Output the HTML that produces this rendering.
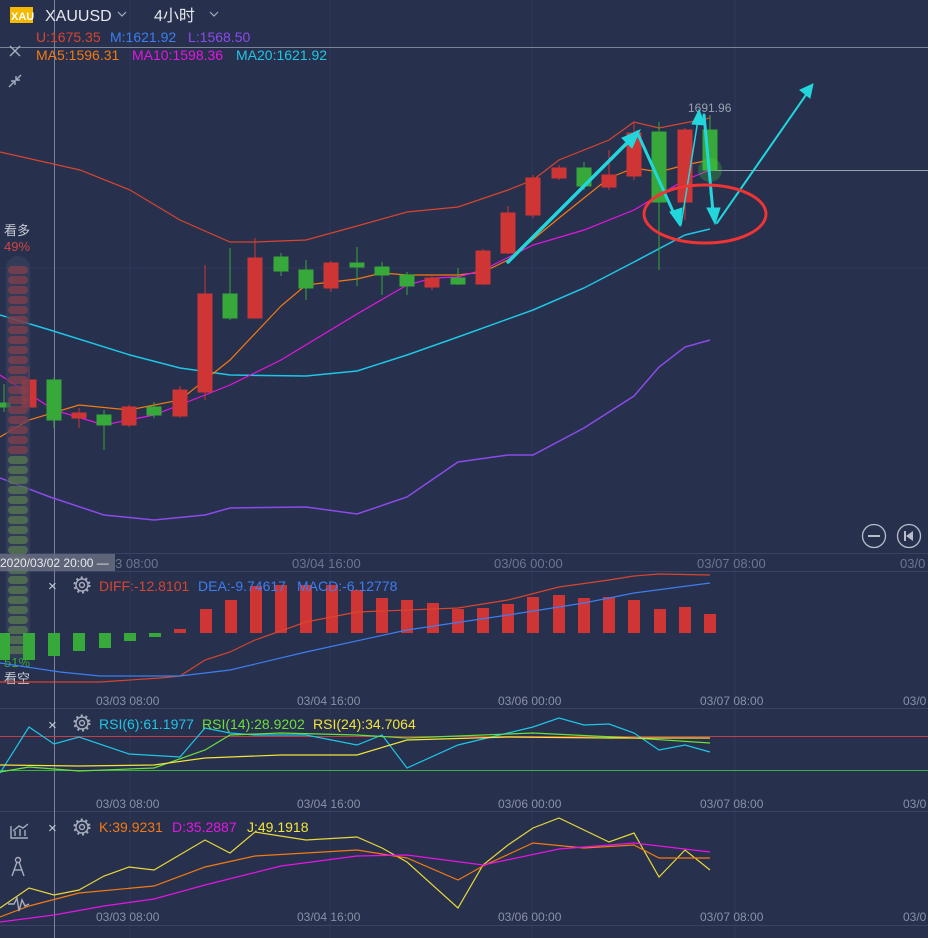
<!DOCTYPE html>
<html><head><meta charset="utf-8"><style>
html,body{margin:0;padding:0;background:#27304d;}
body{width:928px;height:938px;overflow:hidden;position:relative;font-family:"Liberation Sans","Noto Sans CJK SC",sans-serif;}
svg{position:absolute;left:0;top:0}
text{font-family:"Liberation Sans","Noto Sans CJK SC",sans-serif;}
</style></head><body>
<svg width="928" height="938" viewBox="0 0 928 938">
<rect width="928" height="938" fill="#27304d"/>
<g stroke="#2f3856" stroke-width="1">
<line x1="130" y1="0" x2="130" y2="938"/><line x1="330" y1="0" x2="330" y2="938"/>
<line x1="532" y1="0" x2="532" y2="938"/><line x1="735" y1="0" x2="735" y2="938"/>
<line x1="0" y1="268" x2="928" y2="268"/>
</g>
<g stroke="#3a4363" stroke-width="1">
<line x1="0" y1="553.5" x2="928" y2="553.5"/><line x1="0" y1="571.5" x2="928" y2="571.5"/>
<line x1="0" y1="708.5" x2="928" y2="708.5"/><line x1="0" y1="811.5" x2="928" y2="811.5"/>
<line x1="0" y1="925.5" x2="928" y2="925.5"/>
</g>
<line x1="54.5" y1="0" x2="54.5" y2="938" stroke="#7c8298" stroke-width="1"/>
<line x1="0" y1="47.5" x2="928" y2="47.5" stroke="#7c8298" stroke-width="1"/>
<line x1="710" y1="170.5" x2="928" y2="170.5" stroke="#9aa0b0" stroke-width="1"/>

<g fill="none" stroke-width="1.2">
<polyline stroke="#d8452f" points="0,152 80,170 130,190 180,220 230,242 255,242 306,240 357,226 407,212 458,207 508,190 533,180 559,160 609,140 634,122 659,128 710,118"/>
<polyline stroke="#1fc6e6" stroke-width="1.5" points="0,315 50,330 130,355 180,368 230,375 306,376 357,371 407,355 458,337 533,310 584,288 634,262 685,235 710,229"/>
<polyline stroke="#8b4bea" stroke-width="1.5" points="0,478 50,497 104,515 154,520 205,515 230,508 306,507 357,514 407,497 458,462 508,455 533,455 584,428 634,396 659,367 685,347 710,340"/>
<polyline stroke="#f47a12" points="0,437 29,420 79,405 129,410 180,400 230,360 281,306 306,285 357,279 382,273 407,275 458,275 483,272 508,260 559,218 609,178 634,168 659,172 685,165 710,160"/>
<polyline stroke="#e516e3" points="0,375 54,410 104,425 154,415 205,395 230,385 281,360 357,314 407,285 433,278 458,277 483,270 533,245 584,230 634,210 659,195 685,180 710,170"/>
</g>

<g>
<g stroke="#cf3535" fill="#cf3535">
<line x1="29" y1="366" x2="29" y2="410"/><rect x="22" y="380" width="14" height="27"/>
<line x1="79" y1="408" x2="79" y2="428"/><rect x="72" y="413" width="14" height="5"/>
<line x1="129" y1="405" x2="129" y2="427"/><rect x="122" y="407" width="14" height="18"/>
<line x1="180" y1="386" x2="180" y2="418"/><rect x="173" y="390" width="14" height="26"/>
<line x1="205" y1="265" x2="205" y2="400"/><rect x="198" y="294" width="14" height="98"/>
<line x1="255" y1="238" x2="255" y2="318"/><rect x="248" y="258" width="14" height="60"/>
<line x1="331" y1="261" x2="331" y2="292"/><rect x="324" y="263" width="14" height="25"/>
<line x1="432" y1="275" x2="432" y2="290"/><rect x="425" y="278" width="14" height="9"/>
<line x1="483" y1="249" x2="483" y2="285"/><rect x="476" y="251" width="14" height="33"/>
<line x1="508" y1="206" x2="508" y2="254"/><rect x="501" y="213" width="14" height="40"/>
<line x1="533" y1="175" x2="533" y2="218"/><rect x="526" y="178" width="14" height="37"/>
<line x1="559" y1="165" x2="559" y2="180"/><rect x="552" y="168" width="14" height="10"/>
<line x1="609" y1="150" x2="609" y2="190"/><rect x="602" y="175" width="14" height="12"/>
<line x1="634" y1="122" x2="634" y2="180"/><rect x="627" y="133" width="14" height="43"/>
<line x1="685" y1="128" x2="685" y2="220"/><rect x="678" y="130" width="14" height="72"/>
</g>
<g stroke="#37a83a" fill="#37a83a">
<line x1="4" y1="384" x2="4" y2="412"/><rect x="0" y="403" width="10" height="4"/>
<line x1="54" y1="378" x2="54" y2="428"/><rect x="47" y="380" width="14" height="40"/>
<line x1="104" y1="410" x2="104" y2="450"/><rect x="97" y="415" width="14" height="10"/>
<line x1="154" y1="402" x2="154" y2="418"/><rect x="147" y="407" width="14" height="8"/>
<line x1="230" y1="248" x2="230" y2="320"/><rect x="223" y="294" width="14" height="24"/>
<line x1="281" y1="253" x2="281" y2="276"/><rect x="274" y="257" width="14" height="14"/>
<line x1="306" y1="260" x2="306" y2="300"/><rect x="299" y="270" width="14" height="18"/>
<line x1="357" y1="247" x2="357" y2="286"/><rect x="350" y="263" width="14" height="4"/>
<line x1="382" y1="262" x2="382" y2="295"/><rect x="375" y="267" width="14" height="8"/>
<line x1="407" y1="272" x2="407" y2="295"/><rect x="400" y="275" width="14" height="11"/>
<line x1="458" y1="268" x2="458" y2="285"/><rect x="451" y="278" width="14" height="6"/>
<line x1="584" y1="162" x2="584" y2="190"/><rect x="577" y="168" width="14" height="18"/>
<line x1="659" y1="122" x2="659" y2="270"/><rect x="652" y="132" width="14" height="70"/>
<line x1="710" y1="115" x2="710" y2="195"/><rect x="703" y="130" width="14" height="40"/>
</g>
</g>
<circle cx="710" cy="170" r="12" fill="#3fdc3a" opacity="0.25"/>
<text x="688" y="112" fill="#9aa0b0" font-size="12">1691.96</text>

<g stroke="#22d6dc" fill="#22d6dc" stroke-linecap="round">
<line x1="508" y1="262" x2="632" y2="138" stroke-width="3.5"/>
<polygon points="640,130 622,138 632,148"/>
<line x1="637" y1="132" x2="676" y2="218" stroke-width="3"/>
<polygon points="680,226 670,212 682,208"/>
<line x1="681" y1="225" x2="698" y2="120" stroke-width="1.5"/>
<polygon points="699,110 692,124 705,125"/>
<line x1="704" y1="115" x2="713" y2="212" stroke-width="3"/>
<polygon points="715,224 707,208 720,208"/>
<line x1="717" y1="223" x2="808" y2="92" stroke-width="2"/>
<polygon points="813,84 800,90 810,98"/>
</g>
<ellipse cx="705" cy="214" rx="61" ry="29" fill="none" stroke="#ee3434" stroke-width="3"/>

<rect x="6" y="256" width="24" height="404" rx="12" fill="#3a4260" opacity="0.6"/>
<g fill="#8a3e4a" opacity="0.7">
<rect x="8" y="266" width="20" height="8" rx="4"/><rect x="8" y="276" width="20" height="8" rx="4"/><rect x="8" y="286" width="20" height="8" rx="4"/><rect x="8" y="296" width="20" height="8" rx="4"/><rect x="8" y="306" width="20" height="8" rx="4"/><rect x="8" y="316" width="20" height="8" rx="4"/><rect x="8" y="326" width="20" height="8" rx="4"/><rect x="8" y="336" width="20" height="8" rx="4"/><rect x="8" y="346" width="20" height="8" rx="4"/><rect x="8" y="356" width="20" height="8" rx="4"/><rect x="8" y="366" width="20" height="8" rx="4"/><rect x="8" y="376" width="20" height="8" rx="4"/><rect x="8" y="386" width="20" height="8" rx="4"/><rect x="8" y="396" width="20" height="8" rx="4"/><rect x="8" y="406" width="20" height="8" rx="4"/><rect x="8" y="416" width="20" height="8" rx="4"/><rect x="8" y="426" width="20" height="8" rx="4"/><rect x="8" y="436" width="20" height="8" rx="4"/><rect x="8" y="446" width="20" height="8" rx="4"/>
</g>
<g fill="#5a8050" opacity="0.7">
<rect x="8" y="456" width="20" height="8" rx="4"/><rect x="8" y="466" width="20" height="8" rx="4"/><rect x="8" y="476" width="20" height="8" rx="4"/><rect x="8" y="486" width="20" height="8" rx="4"/><rect x="8" y="496" width="20" height="8" rx="4"/><rect x="8" y="506" width="20" height="8" rx="4"/><rect x="8" y="516" width="20" height="8" rx="4"/><rect x="8" y="526" width="20" height="8" rx="4"/><rect x="8" y="536" width="20" height="8" rx="4"/><rect x="8" y="546" width="20" height="8" rx="4"/><rect x="8" y="556" width="20" height="8" rx="4"/><rect x="8" y="566" width="20" height="8" rx="4"/><rect x="8" y="576" width="20" height="8" rx="4"/><rect x="8" y="586" width="20" height="8" rx="4"/><rect x="8" y="596" width="20" height="8" rx="4"/><rect x="8" y="606" width="20" height="8" rx="4"/><rect x="8" y="616" width="20" height="8" rx="4"/><rect x="8" y="626" width="20" height="8" rx="4"/><rect x="8" y="636" width="20" height="8" rx="4"/><rect x="8" y="646" width="20" height="8" rx="4"/>
</g>
<text x="4" y="235" fill="#c8ccd6" font-size="13">看多</text>
<text x="4" y="251" fill="#d04545" font-size="13">49%</text>
<text x="4" y="667" fill="#37a83a" font-size="13">51%</text>
<text x="4" y="683" fill="#c8ccd6" font-size="13">看空</text>

<rect x="0" y="554" width="115" height="17" fill="#6a6f80" opacity="0.85"/>
<text x="0" y="567" fill="#e6e8ee" font-size="12">2020/03/02 20:00 —</text>
<g fill="#6d7590" font-size="13">
<text x="115" y="568">3 08:00</text><text x="292" y="568">03/04 16:00</text><text x="494" y="568">03/06 00:00</text><text x="697" y="568">03/07 08:00</text><text x="900" y="568">03/0</text>
</g>
<g fill="none" stroke="#b8bccb" stroke-width="1.3">
<circle cx="874" cy="536" r="11.5"/><line x1="868" y1="536" x2="880" y2="536" stroke-width="2"/>
<circle cx="909" cy="536" r="11.5"/><line x1="905" y1="531" x2="905" y2="541" stroke-width="2"/>
</g>
<polygon points="913,531 913,541 906,536" fill="#b8bccb"/>

<g fill="#37a83a">
<rect x="0" y="633" width="10" height="27"/><rect x="23" y="633" width="12" height="27"/><rect x="48" y="633" width="12" height="23"/><rect x="73" y="633" width="12" height="18"/><rect x="99" y="633" width="12" height="15"/><rect x="124" y="633" width="12" height="8"/><rect x="149" y="633" width="12" height="4"/>
</g>
<g fill="#cf3535">
<rect x="174" y="629" width="12" height="4"/><rect x="200" y="609" width="12" height="24"/><rect x="225" y="600" width="12" height="33"/><rect x="250" y="586" width="12" height="47"/><rect x="275" y="585" width="12" height="48"/><rect x="300" y="585" width="12" height="48"/><rect x="326" y="585" width="12" height="48"/><rect x="351" y="590" width="12" height="43"/><rect x="376" y="598" width="12" height="35"/><rect x="401" y="600" width="12" height="33"/><rect x="427" y="603" width="12" height="30"/><rect x="452" y="609" width="12" height="24"/><rect x="477" y="608" width="12" height="25"/><rect x="502" y="604" width="12" height="29"/><rect x="527" y="597" width="12" height="36"/><rect x="553" y="595" width="12" height="38"/><rect x="578" y="598" width="12" height="35"/><rect x="603" y="597" width="12" height="36"/><rect x="628" y="600" width="12" height="33"/><rect x="654" y="609" width="12" height="24"/><rect x="679" y="607" width="12" height="26"/><rect x="704" y="614" width="12" height="19"/>
</g>
<g fill="none" stroke-width="1.2">
<polyline stroke="#d8452f" points="0,682 100,682 160,678 180,676 205,660 230,652 255,640 306,622 357,612 458,608 508,600 559,587 609,580 634,576 659,574 710,575"/>
<polyline stroke="#3d7ef0" points="0,663 60,672 100,676 180,676 230,670 306,652 407,630 508,615 584,603 634,593 710,583"/>
</g>
<text x="48" y="591" fill="#c8ccd6" font-size="15">×</text>
<text x="99" y="591" fill="#d8452f" font-size="14">DIFF:-12.8101</text>
<text x="198" y="591" fill="#3d7ef0" font-size="14">DEA:-9.74617</text>
<text x="297" y="591" fill="#3d7ef0" font-size="14">MACD:-6.12778</text>
<g fill="#8a90a6" font-size="12">
<text x="96" y="705">03/03 08:00</text><text x="297" y="705">03/04 16:00</text><text x="498" y="705">03/06 00:00</text><text x="700" y="705">03/07 08:00</text><text x="903" y="705">03/0</text>
</g>

<line x1="0" y1="736.5" x2="928" y2="736.5" stroke="#c0404a" stroke-width="1"/>
<line x1="0" y1="770.5" x2="928" y2="770.5" stroke="#3cb043" stroke-width="1"/>
<g fill="none" stroke-width="1.2">
<polyline stroke="#1fc6e6" points="0,773 29,727 54,744 79,737 129,754 180,757 205,728 230,733 255,735 306,735 357,745 382,735 407,768 458,745 508,733 533,727 559,718 584,725 609,724 634,733 659,750 685,745 710,752"/>
<polyline stroke="#6be03a" points="0,772 29,767 79,771 154,768 205,750 230,735 281,733 357,735 407,738 458,736 533,733 634,738 710,743"/>
<polyline stroke="#f2e53a" points="0,765 79,766 154,765 205,758 281,755 357,755 407,740 508,737 609,738 710,738"/>
</g>
<text x="48" y="730" fill="#c8ccd6" font-size="15">×</text>
<text x="99" y="729" fill="#1fc6e6" font-size="14">RSI(6):61.1977</text>
<text x="202" y="729" fill="#6be03a" font-size="14">RSI(14):28.9202</text>
<text x="313" y="729" fill="#f2e53a" font-size="14">RSI(24):34.7064</text>
<g fill="#8a90a6" font-size="12">
<text x="96" y="808">03/03 08:00</text><text x="297" y="808">03/04 16:00</text><text x="498" y="808">03/06 00:00</text><text x="700" y="808">03/07 08:00</text><text x="903" y="808">03/0</text>
</g>

<g fill="none" stroke-width="1.2">
<polyline stroke="#e8d83a" points="0,908 29,888 54,895 79,890 104,876 129,867 154,870 205,840 230,853 255,832 306,840 357,837 382,848 407,862 458,908 483,865 508,845 533,828 559,818 584,830 609,842 634,833 659,877 685,850 710,870"/>
<polyline stroke="#f47a12" points="0,917 29,906 79,893 154,886 205,867 255,856 357,850 407,858 458,880 483,866 533,843 584,848 634,845 659,858 710,858"/>
<polyline stroke="#e516e3" points="0,922 54,915 104,906 154,899 205,885 281,866 357,856 407,855 483,865 559,849 634,843 710,852"/>
</g>
<text x="48" y="833" fill="#c8ccd6" font-size="15">×</text>
<text x="99" y="832" fill="#f47a12" font-size="14">K:39.9231</text>
<text x="172" y="832" fill="#e516e3" font-size="14">D:35.2887</text>
<text x="247" y="832" fill="#f2e53a" font-size="14">J:49.1918</text>
<g fill="#8a90a6" font-size="12">
<text x="96" y="921">03/03 08:00</text><text x="297" y="921">03/04 16:00</text><text x="498" y="921">03/06 00:00</text><text x="700" y="921">03/07 08:00</text><text x="903" y="921">03/0</text>
</g>

<g fill="none" stroke="#a8adbd" stroke-width="1.4">
<circle cx="82" cy="585" r="6"/><circle cx="82" cy="585" r="2.5"/>
<circle cx="82" cy="723" r="6"/><circle cx="82" cy="723" r="2.5"/>
<circle cx="82" cy="827" r="6"/><circle cx="82" cy="827" r="2.5"/>
</g>
<g stroke="#a8adbd" stroke-width="2.5" stroke-dasharray="2 2.7">
<circle cx="82" cy="585" r="7.3" fill="none"/>
<circle cx="82" cy="723" r="7.3" fill="none"/>
<circle cx="82" cy="827" r="7.3" fill="none"/>
</g>

<g stroke="#a8adbd" stroke-width="1.4" fill="none">
<line x1="10" y1="46" x2="20" y2="56"/><line x1="20" y1="46" x2="10" y2="56"/>
<line x1="9" y1="87" x2="15" y2="81"/><polyline points="11,81 15,81 15,85"/>
<line x1="21" y1="75" x2="16" y2="80"/><polyline points="16,76 16,80 20,80"/>
<polyline points="11,826 11,838 28,838"/><line x1="15" y1="836" x2="15" y2="831"/><line x1="20" y1="836" x2="20" y2="829"/><line x1="25" y1="836" x2="25" y2="830"/>
<polyline points="13,831 19,826 23,828 28,824"/>
<circle cx="18" cy="860" r="2.5"/><line x1="17" y1="862" x2="12" y2="876"/><line x1="19" y1="862" x2="24" y2="876"/><line x1="14" y1="870" x2="22" y2="870"/>
<polyline points="8,904 14,904 17,898 19,911 22,900 25,906 29,904"/>
</g>

<rect x="10" y="7" width="23" height="16" fill="#f5b800"/>
<text x="11" y="20" fill="#fff" font-size="11" font-weight="bold">XAU</text>
<text x="45" y="21" fill="#e6e8ee" font-size="16">XAUUSD</text>
<polyline points="118,12 122,16 126,12" fill="none" stroke="#a8adbd" stroke-width="1.2"/>
<text x="154" y="21" fill="#e6e8ee" font-size="16">4小时</text>
<polyline points="210,12 214,16 218,12" fill="none" stroke="#a8adbd" stroke-width="1.2"/>
<text x="36" y="42" fill="#d8452f" font-size="14">U:1675.35</text>
<text x="110" y="42" fill="#3d7ef0" font-size="14">M:1621.92</text>
<text x="188" y="42" fill="#8b4bea" font-size="14">L:1568.50</text>
<text x="36" y="60" fill="#f47a12" font-size="14">MA5:1596.31</text>
<text x="132" y="60" fill="#e516e3" font-size="14">MA10:1598.36</text>
<text x="236" y="60" fill="#1fc6e6" font-size="14">MA20:1621.92</text>
</svg>
</body></html>
